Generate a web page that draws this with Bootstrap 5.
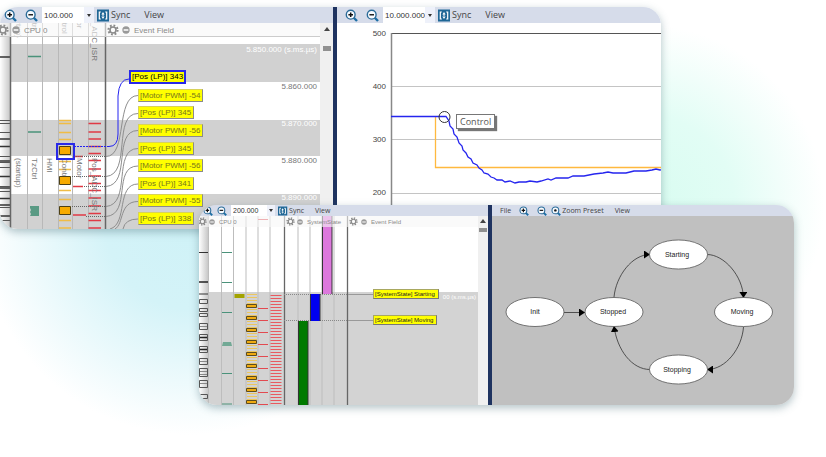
<!DOCTYPE html>
<html lang="en">
<head>
<meta charset="utf-8">
<meta name="viewport" content="width=device-width, initial-scale=1">
<title>Trace and state views</title>
<link rel="stylesheet" href="https://cdn.jsdelivr.net/npm/bootstrap@5.3.0/dist/css/bootstrap.min.css">
<style>
body{font-family:"Open Sans","Noto Sans",sans-serif;font-size:9px;line-height:12px;color:#444;
 background:radial-gradient(circle 210px at 23% 225px,#cff2f7 0,#d4f3f8 40%,rgba(255,255,255,0) 100%),
 radial-gradient(circle 180px at 78% 205px,#d8fcf0 0,#e2fdf5 50%,rgba(255,255,255,0) 100%),#fff;
 background-repeat:no-repeat;min-height:100vh}
.stage{padding-top:7px;padding-bottom:52px}
.win{overflow:hidden;border-radius:18px;position:relative;box-shadow:0 3px 9px rgba(60,100,110,.38)}
.win-a{width:80%}
.win-b{width:72%;margin-left:24.1%;margin-top:-24px;font-size:7px;line-height:9px}
.pane-l{flex:0 0 50.4%;min-width:0}
.win-b .pane-l{flex-basis:48.6%}
.splitter{flex:0 0 4px;background:#1f3360}
.bar{height:16px;background:#d6dcea}
.win-b .bar{height:11px}
.tool{border:0;background:none;padding:0;color:#444;font-size:inherit;line-height:inherit;display:flex;align-items:center;gap:1px}
.tool svg{width:13px;height:13px;display:block}
.win-b .tool svg{width:10px;height:10px}
.view-tool{margin-left:14px}
.win-b .view-tool{margin-left:11px}
.combo{background:#fff}
.combo input{border:0;background:#fff;width:42px;height:100%;padding:0 0 0 2px;color:#333;font:8px "Liberation Sans",sans-serif}
.combo button{border:0;width:10px;padding:0;background:#eef1fa;display:flex;align-items:center;justify-content:center}
.win-b .combo input{width:36px;font-size:7px}
.win-b .combo button{width:8px}
.sync-tool{margin-left:3px}
.tri{border:2px solid transparent;border-top:3px solid #333;border-bottom:0}
.layers{display:grid;grid-template-columns:minmax(0,1fr)}
.layers>*{grid-area:1/1;min-width:0}
.layers svg{width:100%;display:block}
.trace-a{height:206px}.trace-b{height:189px}
.diagram{background:#c0c0c0}
svg text{font-family:"Liberation Sans",sans-serif}
.scroller{flex:0 0 13px;background:#f0f0f0;padding-top:4px}
.win-b .scroller{flex-basis:10px;padding-top:3px}
.arrow-up{border:3px solid transparent;border-bottom:4px solid #444;border-top:0}
.thumb{width:8px;height:5px;background:#909090;margin-top:15px}
.win-b .thumb{height:4px;margin-top:5px}
.events,.times{font:8px/12px "Liberation Sans",sans-serif}
.events{padding:47px 0 4px 129px}
.event{background:#ff0;border:1px solid #d8d25a;border-right-color:#8b8b8b;border-bottom-color:#8b8b8b;color:#77771c;height:13px;line-height:11px;padding:0 2px 0 1px;margin-left:9px;white-space:nowrap}
.event.picked{margin-left:0;height:14px;border:2px solid #2828e8;color:#000;line-height:10px;padding:0 1px}
.events-b{padding:73px 0 0 174px;font:6px/9px "Liberation Sans",sans-serif;gap:16px}
.events-b .event{height:10px;line-height:8px;color:#222;margin-left:0;border-color:#a8a860 #777 #777 #a8a860;padding:0 3px 0 1px}
.times{padding:21px 3px 0 0;gap:25px}
.lt{color:#fff}.dk{color:#777}
.tip{background:#fff;border:1px solid #777;box-shadow:2px 2px 1px #777;color:#555;position:absolute;left:119px;top:91px;padding:0 3px;line-height:13px}
</style>
<script src="https://cdn.jsdelivr.net/npm/bootstrap@5.3.0/dist/js/bootstrap.bundle.min.js" defer></script>
</head>
<body>
<svg width="0" height="0" class="position-absolute" aria-hidden="true">
 <defs>
  <symbol id="lens" viewBox="0 0 13 13"><path d="M8.5 8.5 12 12" stroke="#1c6ea4" stroke-width="2.4"/><circle cx="5.7" cy="5.7" r="4.4" fill="#f7fbff" stroke="#2b6c99" stroke-width="1.4"/></symbol>
  <symbol id="zin" viewBox="0 0 13 13"><use href="#lens"/><path d="M3.4 5.7h4.6M5.7 3.4V8" stroke="#111" stroke-width="1.5"/></symbol>
  <symbol id="zout" viewBox="0 0 13 13"><use href="#lens"/><path d="M3.4 5.7h4.6" stroke="#222" stroke-width="1.4"/></symbol>
  <symbol id="zdot" viewBox="0 0 13 13"><use href="#lens"/><circle cx="5.7" cy="5.7" r="1.6" fill="#111"/></symbol>
  <symbol id="sync" viewBox="0 0 13 13"><path d="M0 .5h12v12H0z" fill="#1f6796"/><path d="M3.800 3H2.300v7h1.500M8.200 3h1.500v7H8.200" fill="none" stroke="#fff" stroke-width="1.200"/><path d="M6 3l1.600 2.500H4.400zM6 10l1.600-2.500H4.400zM5.500 5h1v3h-1z" fill="#fff"/></symbol>
  <symbol id="gear" viewBox="0 0 12 12"><circle cx="6" cy="6" r="4.6" fill="none" stroke="#8a8a8a" stroke-width="2" stroke-dasharray="1.8 1.8"/><circle cx="6" cy="6" r="3" fill="none" stroke="#8a8a8a" stroke-width="1.6"/></symbol>
  <symbol id="minus" viewBox="0 0 12 12"><circle cx="6" cy="6" r="5.500" fill="#999"/><path d="M2.500 6h7" stroke="#fff" stroke-width="2"/></symbol>
  <linearGradient id="strip"><stop offset="0" stop-color="#fff"/><stop offset="1" stop-color="#c8c8c8"/></linearGradient>
  <marker id="head" viewBox="0 0 6 8" refX="6" refY="4" markerWidth="6" markerHeight="8" markerUnits="userSpaceOnUse" orient="auto"><path d="M0 0 6 4 0 8z"/></marker>
  <g id="lanes" font-size="8" fill="#777">
   <text transform="translate(16 158) rotate(90)">(startup)</text>
   <text transform="translate(32 158) rotate(90)">TzCtrl</text>
   <text transform="translate(47 158) rotate(90)">HMI</text>
   <text transform="translate(62 158) rotate(90)">Control</text>
   <text transform="translate(77 158) rotate(90)">Motor</text>
   <text transform="translate(92 158) rotate(90)">Pos_ADC_ISR</text>
  </g>
 </defs>
</svg>

<main class="stage">
 <section class="win win-a d-flex" aria-label="Trace and plot">
  <div class="pane-l">
   <div class="bar d-flex align-items-center ps-1">
    <button class="tool" type="button" aria-label="Zoom in"><svg><use href="#zin"/></svg></button>
    <button class="tool ms-2" type="button" aria-label="Zoom out"><svg><use href="#zout"/></svg></button>
    <div class="combo d-flex align-self-stretch ms-1"><input type="text" value="100.000" aria-label="Zoom level"><button type="button" aria-label="Zoom levels"><span class="tri"></span></button></div>
    <button class="tool sync-tool" type="button"><svg><use href="#sync"/></svg>Sync</button>
    <button class="tool view-tool" type="button">View</button>
   </div>
   <div class="d-flex">
    <div class="layers flex-fill">
     <svg class="trace-a" aria-hidden="true"><g transform="translate(0 -23)">
      <rect y="23" width="100%" height="206" fill="#fff"/>
      <g fill="#d1d1d1"><rect y="44" width="100%" height="38"/><rect y="120" width="100%" height="36"/><rect y="194" width="100%" height="35"/></g>
      <rect y="23" width="10" height="206" fill="url(#strip)"/>
      <g fill="none">
       <path d="M0 120.500h10M0 123.500h10M0 132.500h10M0 156.500h10M0 162.500h10M0 167.500h10M0 186.500h10M0 191.500h10M0 207.500h10M0 220.500h10" stroke="#555"/>
       <path d="M0 57h10M0 139h10M0 146.500h10M0 161h10M0 176.500h10M0 188h10M0 198.500h10M0 205h10M0 216h10" stroke="#333" stroke-width="1.500"/>
       <path d="M27.500 23v206M42.500 23v206M58.500 23v206M72.500 23v206M88.500 23v206" stroke="#b8b8b8"/>
       <path d="M10.500 23v206M105.500 23v206" stroke="#666" stroke-width="1.500"/>
       <path d="M28 56.500h13M28 132h13" stroke="#4a927a" stroke-width="1.500"/>
       <path d="M59 120.500h12M59 123.500h12M59 132.500h12M59 139.500h12M59 161.500h12M59 169.500h12M59 190.500h12M59 199.500h12M59 220.500h12M59 228h12" stroke="#f0bc45" stroke-width="1.500"/>
       <path d="M88.500 123.500H101M88.500 132H101M88.500 139H101M88.500 146.500H101M88.500 153.500H101M88.500 160.500H101M88.500 169H101M88.500 176H101M88.500 183.500H101M88.500 190.500H101M88.500 198H101M88.500 206H101M88.500 213.500H101M88.500 220.500H101M88.500 228H101M73 156.500h10M73 186.500h10M73 215h13" stroke="#e03a45" stroke-width="1.300"/>
       <path d="M74 156.500h32M72 176.500h34M84 186.500h22M72 206.500h34M86 216.500h20" stroke="#666" stroke-dasharray="1 1"/>
       <path d="M74 146.500h36" stroke="#2424f0" stroke-dasharray="2 1"/>
       <path d="M106 156.500C128 156.500 115 95.500 138 95.500M106 176.500C132 174.500 112 113.500 138 113.500M106 186.500C132 184.500 112 130.500 138 130.500M106 206.500C132 204.500 112 148.500 138 148.500M106 216.500C132 214.500 112 166 138 166M110 229C128 224 116 184 138 184M115 229C124 224 119 201.500 138 201.500M123 229Q125 219 138 219" stroke="#8d8d8d"/>
       <path d="M109 146.500Q118 146.500 118 134V96Q119 79 129 79" stroke="#2424f0"/>
      </g>
      <path d="M30 206h9v10h-9l1-2-1-2 1-2-1-2z" fill="#5a9a84"/>
      <use href="#lanes"/><use href="#lanes" y="-150"/>
      <g fill="#f7ab00" stroke="#4d4015"><path d="M59.500 146.500h11v8h-11zM59.500 176.500h11v8h-11zM59.500 206.500h11v8h-11z"/></g>
      <rect x="57" y="144" width="17" height="15" fill="none" stroke="#2929e8" stroke-width="2"/>
      <rect y="23" width="100%" height="13" fill="#f7f7f7" opacity=".6"/><path d="M0 36.500H320" stroke="#ccc"/>
      <use href="#gear" x="-3" y="24" width="12" height="12"/><use href="#minus" x="12" y="26" width="8" height="8"/>
      <use href="#gear" x="107" y="24" width="12" height="12"/><use href="#minus" x="122" y="26" width="8" height="8"/>
      <g font-size="8" fill="#8a8a8a"><text x="24" y="33">CPU 0</text><text x="134" y="33">Event Field</text></g>
     </g></svg>
     <div class="times d-flex flex-column align-items-end"><span class="lt">5.850.000 (s.ms.µs)</span><span class="dk">5.860.000</span><span class="lt">5.870.000</span><span class="dk">5.880.000</span><span class="lt">5.890.000</span></div>
     <div class="events d-flex flex-column align-items-start justify-content-between">
      <span class="event picked">[Pos (LP)] 343</span><span class="event">[Motor PWM] -54</span><span class="event">[Pos (LP)] 345</span><span class="event">[Motor PWM] -56</span><span class="event">[Pos (LP)] 345</span><span class="event">[Motor PWM] -56</span><span class="event">[Pos (LP)] 341</span><span class="event">[Motor PWM] -55</span><span class="event">[Pos (LP)] 338</span>
     </div>
    </div>
    <div class="scroller d-flex flex-column align-items-center"><span class="arrow-up"></span><span class="thumb"></span></div>
   </div>
  </div>
  <div class="splitter"></div>
  <div class="flex-fill bg-white">
   <div class="bar d-flex align-items-center ps-2">
    <button class="tool" type="button" aria-label="Zoom in"><svg><use href="#zin"/></svg></button>
    <button class="tool ms-2" type="button" aria-label="Zoom out"><svg><use href="#zout"/></svg></button>
    <div class="combo d-flex align-self-stretch ms-1"><input type="text" value="10.000.000" aria-label="Plot zoom level"><button type="button" aria-label="Plot zoom levels"><span class="tri"></span></button></div>
    <button class="tool sync-tool" type="button"><svg><use href="#sync"/></svg>Sync</button>
    <button class="tool view-tool" type="button">View</button>
   </div>
   <div class="layers position-relative">
    <svg class="trace-a" role="img" aria-label="Position plot"><g transform="translate(-337 -23)" fill="none">
     <path d="M392 86.500H1400M392 139.500H1400M392 193.500H1400" stroke="#c4c4c4"/>
     <path d="M391 33.500H1400" stroke="#555"/><path d="M391.500 33v196" stroke="#888" stroke-width="1.500"/>
     <g fill="#444" font-size="8" text-anchor="end"><text x="386" y="36">500</text><text x="386" y="89">400</text><text x="386" y="142">300</text><text x="386" y="195">200</text></g>
     <path d="M435.500 117v50.500H1400" stroke="#ffb93f" stroke-width="1.300"/>
     <path d="M391 116.500H446L449 121 450 126 453 129 454 134 457 137 459 143 462 146 463 150 466 153 468 157 471 159 473 163 477 165 479 168 482 170 484 173 488 174 491 177 494 178 497 180 502 180 505 182 510 181 515 183 519 182H526L530 181 537 182 541 181 548 179 551 180 556 178 568 178 573 176 584 176 589 175 594 174 603 173 608 172 613 173 626 173 634 171 646 171 652 170 656 169 660 170 668 169" stroke="#2525ee" stroke-width="1.300"/>
     <circle cx="444.500" cy="117" r="5.500" stroke="#333"/>
    </g></svg>
    <span class="tip">Control</span>
   </div>
  </div>
 </section>

 <section class="win win-b d-flex" aria-label="State trace and state machine">
  <div class="pane-l">
   <div class="bar d-flex align-items-center ps-1">
    <button class="tool" type="button" aria-label="Zoom in"><svg><use href="#zin"/></svg></button>
    <button class="tool ms-1" type="button" aria-label="Zoom out"><svg><use href="#zout"/></svg></button>
    <div class="combo d-flex align-self-stretch ms-1"><input type="text" value="200.000" aria-label="State zoom level"><button type="button" aria-label="State zoom levels"><span class="tri"></span></button></div>
    <button class="tool sync-tool" type="button"><svg><use href="#sync"/></svg>Sync</button>
    <button class="tool view-tool" type="button">View</button>
   </div>
   <div class="d-flex">
    <div class="layers flex-fill">
     <svg class="trace-b" aria-hidden="true"><g transform="translate(-199 -216)">
      <rect x="199" y="216" width="100%" height="76" fill="#fff"/><rect x="199" y="292" width="100%" height="113" fill="#d3d3d3"/>
      <rect x="199" y="216" width="9" height="189" fill="url(#strip)"/>
      <text x="476" y="299" font-size="6" fill="#fff" text-anchor="end">00 (s.ms.µs)</text>
      <g fill="none">
       <path d="M199 252.500h9M199 294h9" stroke="#333"/><path d="M199 282h9M199 337.500h9M199 349.500h9" stroke="#222" stroke-width="1.500"/>
       <path d="M199.500 299.500h8v4h-8zM199.500 308.500h8v3h-8zM199.500 313.500h8v3h-8zM199.500 323.500h8v6h-8zM199.500 334.500h8v6h-8zM199.500 346.500h8v6h-8zM199.500 358.500h8v6h-8zM199.500 368.500h8v8h-8zM199.500 380.500h8v7h-8zM199.500 394.500h8v4h-8z" stroke="#555"/>
       <path d="M200 326.500h7M200 361.500h7M200 371.500h7M200 374.500h7M200 383.500h7" stroke="#888"/>
       <path d="M208.500 216v189M221.500 216v189M233.500 216v189M246 216v189M258 216v189M270 216v189M298 216v189M310 216v189M322 216v189M334 216v189" stroke="#bdbdbd"/>
       <path d="M284.500 216v189M347.500 216v189" stroke="#666" stroke-width="1.300"/>
       <path d="M222 252.500h10M222 282.500h10M222 312.500h10M222 373.500h10M222 404h10" stroke="#4a927a"/>
       <path d="M252 294v111" stroke="#ecc65f" stroke-width="10" stroke-dasharray="1 2"/>
       <path d="M276 295v110" stroke="#e85a60" stroke-width="11" stroke-dasharray="1 2"/>
       <path d="M258 219.500h10M258 308.500h10M258 320.500h10M258 332.500h10M258 344.500h10M258 356.500h10M258 368.500h10M258 380.500h10M258 392.500h10M258 404.500h10" stroke="#e24a50"/>
       <path d="M284 294.500h90M284 320.500h90" stroke="#888" stroke-dasharray="1 1"/><path d="M348 294.500h26M348 320.500h26" stroke="#999"/>
      </g>
      <path d="M234.500 294h10v4h-10z" fill="#a3a300"/><path d="M223 342h8l1 4h-10z" fill="#72a995"/>
      <path d="M246.500 304.500h10v3h-10zM246.500 316.500h10v3h-10zM246.500 328.500h10v3h-10zM246.500 340.500h10v3h-10zM246.500 352.500h10v3h-10zM246.500 364.500h10v3h-10zM246.500 376.500h10v3h-10zM246.500 388.500h10v3h-10zM246.500 400.500h10v3h-10z" fill="#f0aa10" stroke="#5c4d20"/>
      <g fill="#333"><path d="M322 216h10.500v78H322z"/><path d="M310 294h10.500v27H310z"/><path d="M298 321h10.500v84H298z"/></g>
      <path d="M323 216h8.500v78H323z" fill="#dc78dc"/><path d="M311 294h8.500v27H311z" fill="#0000f0"/><path d="M299 321h8.500v84H299z" fill="#007a00"/>
      <rect x="199" y="216" width="100%" height="11" fill="#f7f7f7" opacity=".6"/>
      <g><use href="#gear" x="198" y="217" width="9" height="9"/><use href="#minus" x="209" y="219" width="6" height="6"/><use href="#gear" x="286" y="217" width="9" height="9"/><use href="#minus" x="297" y="219" width="6" height="6"/><use href="#gear" x="349" y="217" width="9" height="9"/><use href="#minus" x="361" y="219" width="6" height="6"/></g>
      <g font-size="6" fill="#8a8a8a"><text x="219" y="224">CPU 0</text><text x="307" y="224">SystemState</text><text x="371" y="224">Event Field</text></g>
     </g></svg>
     <div class="events-b d-flex flex-column align-items-start"><span class="event">[SystemState] Starting</span><span class="event">[SystemState] Moving</span></div>
    </div>
    <div class="scroller d-flex flex-column align-items-center"><span class="arrow-up"></span><span class="thumb"></span></div>
   </div>
  </div>
  <div class="splitter"></div>
  <div class="flex-fill">
   <div class="bar d-flex align-items-center ps-2">
    <button class="tool" type="button">File</button>
    <button class="tool ms-2" type="button" aria-label="Zoom in"><svg><use href="#zin"/></svg></button>
    <button class="tool ms-2" type="button" aria-label="Zoom out"><svg><use href="#zout"/></svg></button>
    <button class="tool ms-1" type="button"><svg><use href="#zdot"/></svg>Zoom Preset</button>
    <button class="tool view-tool" type="button">View</button>
   </div>
   <div class="layers">
    <svg class="trace-b diagram" role="img" aria-label="State machine"><g transform="translate(-492 -216)">
     <g fill="none" stroke="#333" stroke-width=".8">
      <path d="M564 312.500h21" marker-end="url(#head)"/>
      <path d="M614 297C616 276 632 254.500 650 254.500" marker-end="url(#head)"/>
      <path d="M707 254.500C724 254.500 743 276 743.500 298" marker-end="url(#head)"/>
      <path d="M743.500 327C742 348 726 369.500 707 369.500" marker-end="url(#head)"/>
      <path d="M650 369.500C632 369.500 617 350 614 326" marker-end="url(#head)"/>
     </g>
     <g fill="#fff" stroke="#555" stroke-width=".8"><ellipse cx="535" cy="312" rx="29" ry="14.500"/><ellipse cx="614" cy="312" rx="29" ry="14.500"/><ellipse cx="678.500" cy="254.500" rx="29" ry="14.500"/><ellipse cx="743.500" cy="312" rx="29" ry="14.500"/><ellipse cx="678.500" cy="369.500" rx="29" ry="14.500"/></g>
     <g font-size="7" fill="#222" text-anchor="middle"><text x="535" y="314">Init</text><text x="613" y="314">Stopped</text><text x="677" y="257">Starting</text><text x="742" y="314">Moving</text><text x="677" y="372">Stopping</text></g>
    </g></svg>
   </div>
  </div>
 </section>
</main>
</body>
</html>
